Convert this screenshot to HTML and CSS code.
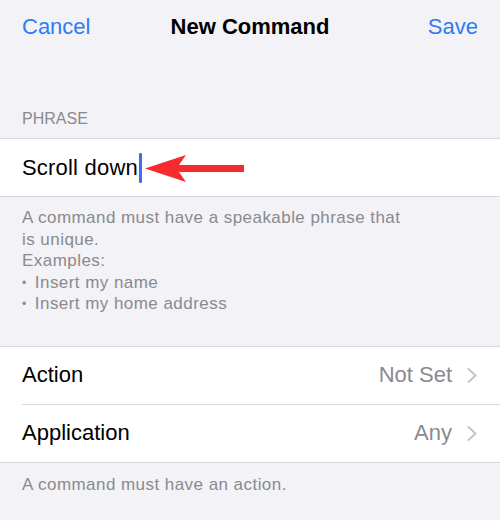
FILE: index.html
```html
<!DOCTYPE html>
<html>
<head>
  <meta charset="UTF-8">
  <title>New Command</title>
  <link rel="stylesheet" href="styles.css">
</head>
<body>
  <div class="nav-bar">
    <span class="nav-btn">Cancel</span>
    <span class="nav-title">New Command</span>
    <span class="nav-btn save">Save</span>
  </div>

  <div class="section-header">PHRASE</div>
  <div class="group">
    <div class="field-row">
      <span class="field-text">Scroll down</span>
      <span class="cursor"></span>
      <svg class="arrow" width="100" height="28" viewBox="0 0 100 28">
        <polygon points="0,13.5 41,0 34,10 99,10 99,17 34,17 41,27" fill="#f52b2f"/>
      </svg>
    </div>
  </div>
  <div class="section-footer phrase-help">
    A command must have a speakable phrase that<br>
    is unique.<br>
    Examples:<br>
    <span class="bullet">•</span> Insert my name<br>
    <span class="bullet">•</span> Insert my home address
  </div>

  <div class="group">
    <div class="list-row">
      <span class="row-label">Action</span>
      <span class="row-value">Not Set</span>
      <svg class="chevron" width="10" height="15" viewBox="0 0 10 15">
        <polyline points="1.5,1 8.5,7.5 1.5,14" fill="none" stroke="#c4c4c8" stroke-width="2" stroke-linecap="round" stroke-linejoin="round"/>
      </svg>
    </div>
    <div class="list-row">
      <span class="row-label">Application</span>
      <span class="row-value">Any</span>
      <svg class="chevron" width="10" height="15" viewBox="0 0 10 15">
        <polyline points="1.5,1 8.5,7.5 1.5,14" fill="none" stroke="#c4c4c8" stroke-width="2" stroke-linecap="round" stroke-linejoin="round"/>
      </svg>
    </div>
  </div>
  <div class="section-footer">A command must have an action.</div>
</body>
</html>
```

FILE: styles.css
```css
body {
  margin: 0;
  width: 500px;
  height: 520px;
  overflow: hidden;
  background: #f2f2f7;
  font-family: 'Liberation Sans', Arial, sans-serif;
  color: #000;
}

.nav-bar {
  height: 54px;
  padding: 0 22px;
  display: grid;
  grid-template-columns: 1fr auto 1fr;
  align-items: center;
  font-size: 22px;
}

.nav-btn {
  color: #2f7bf5;
}

.nav-btn.save {
  text-align: right;
}

.nav-title {
  font-weight: bold;
}

.section-header {
  padding: 55px 22px 9px;
  font-size: 16px;
  line-height: 20px;
  color: #8a8a8e;
}

.group {
  background: #fff;
  border-top: 1px solid #d8d8dc;
  border-bottom: 1px solid #d8d8dc;
}

.field-row {
  height: 57px;
  padding: 0 22px;
  display: flex;
  align-items: center;
  font-size: 22px;
}

.field-text {
  letter-spacing: 0.2px;
}

.cursor {
  width: 3px;
  height: 30px;
  margin-left: 1px;
  border-radius: 1px;
  background: #4a67ee;
}

.arrow {
  margin-left: 3px;
  margin-top: 2px;
}

.section-footer {
  padding: 11px 22px 0;
  font-size: 17px;
  line-height: 21.5px;
  letter-spacing: 0.45px;
  color: #8a8a8e;
}

.phrase-help {
  padding: 10px 22px 31px;
}

.bullet {
  font-size: 12px;
  line-height: 0;
  vertical-align: 1px;
  margin-right: 3px;
}

.list-row {
  height: 57px;
  margin-left: 22px;
  padding-right: 23px;
  display: flex;
  align-items: center;
  font-size: 22px;
}

.list-row + .list-row {
  border-top: 1px solid #d8d8dc;
}

.row-label {
  flex: 1;
}

.row-value {
  color: #8a8a8e;
  margin-right: 15px;
}

.chevron {
  display: block;
}
```
